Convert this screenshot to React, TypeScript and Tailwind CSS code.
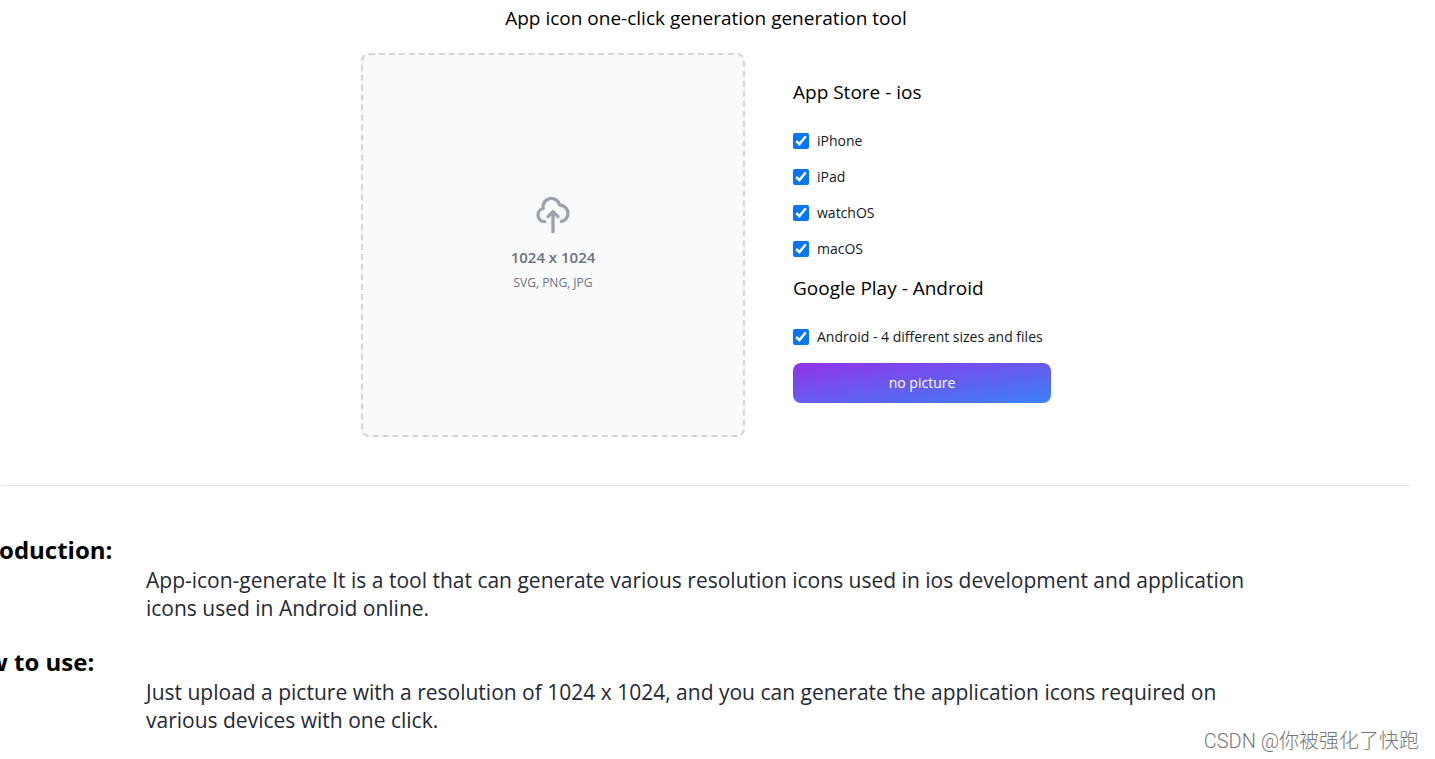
import { useState } from "react";

const iosTargets = ["iPhone", "iPad", "watchOS", "macOS"];
const androidTargets = ["Android - 4 different sizes and files"];

const sections = [
  {
    title: "Introduction:",
    text: "App-icon-generate It is a tool that can generate various resolution icons used in ios development and application icons used in Android online.",
  },
  {
    title: "How to use:",
    text: "Just upload a picture with a resolution of 1024 x 1024, and you can generate the application icons required on various devices with one click.",
  },
];

function TargetCheckbox({ label }: { label: string }) {
  const [checked, setChecked] = useState(true);

  return (
    <label className="flex h-9 items-center gap-2 text-sm text-[#111827]">
      <input
        type="checkbox"
        className="h-4 w-4"
        checked={checked}
        onChange={(e) => setChecked(e.target.checked)}
      />
      {label}
    </label>
  );
}

function Dropzone() {
  return (
    <label className="flex h-96 w-96 cursor-pointer flex-col items-center justify-center rounded-lg border-2 border-dashed border-[#d1d5db] bg-[#f9fafc]">
      <div className="flex flex-col items-center pt-5 pb-6 text-[#6b7280]">
        <svg
          className="mb-3 h-10 w-10 text-[#9ca3af]"
          fill="none"
          stroke="currentColor"
          strokeWidth="2"
          strokeLinecap="round"
          strokeLinejoin="round"
          viewBox="0 0 24 24"
        >
          <path d="M7 16a4 4 0 01-.88-7.903A5 5 0 1115.9 6L16 6a5 5 0 011 9.9M15 13l-3-3m0 0l-3 3m3-3v12" />
        </svg>
        <p className="mb-2 text-[15px] leading-5 font-semibold">1024 x 1024</p>
        <p className="text-xs">SVG, PNG, JPG</p>
      </div>
      <input type="file" className="hidden" />
    </label>
  );
}

export default function App() {
  return (
    <main className="relative min-h-screen overflow-hidden bg-white pr-[23px] font-['Open_Sans',sans-serif] text-black">
      <h1 className="pt-1 text-center text-[19px] leading-7">
        App icon one-click generation generation tool
      </h1>

      <div className="mt-[21px] flex justify-center gap-12">
        <Dropzone />

        <div className="flex min-w-[258px] flex-col pt-[25px]">
          <h2 className="mb-[17px] text-[19px] leading-7">App Store - ios</h2>
          {iosTargets.map((name) => (
            <TargetCheckbox key={name} label={name} />
          ))}
          <h2 className="mt-[7px] mb-[17px] text-[19px] leading-7">
            Google Play - Android
          </h2>
          {androidTargets.map((name) => (
            <TargetCheckbox key={name} label={name} />
          ))}
          <button className="mt-2 h-10 rounded-lg bg-[linear-gradient(to_bottom_right,#9333ea,#3b82f6)] text-sm font-medium text-white">
            no picture
          </button>
        </div>
      </div>

      <hr className="mx-0.5 mt-12 mb-12 border-[#e5e7eb]" />

      {sections.map((section) => (
        <section key={section.title} className="mb-6">
          <h2 className="-ml-[46px] text-2xl font-bold">{section.title}</h2>
          <p className="mr-40 ml-[146px] text-[21px] leading-7 text-[#1f2937]">
            {section.text}
          </p>
        </section>
      ))}

      {/* Watermark */}
      <span className="absolute right-4 bottom-1 font-['Roboto','Noto_Sans_CJK_SC',sans-serif] text-xl font-light text-[#777]">
        CSDN @你被强化了快跑
      </span>
    </main>
  );
}
